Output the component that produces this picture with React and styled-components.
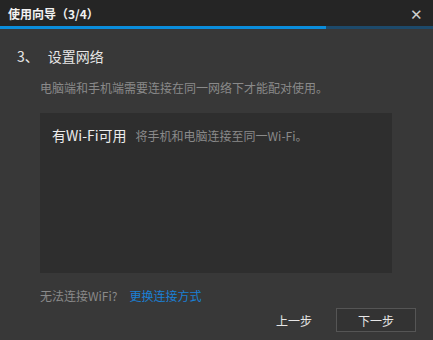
import React from "react";
import styled, { createGlobalStyle } from "styled-components";

const GlobalStyle = createGlobalStyle`
  html, body { margin: 0; padding: 0; background: #383838; }
  body {
    font-family: "Microsoft YaHei", "Noto Sans CJK SC", "Liberation Sans", sans-serif;
  }
`;

const Dialog = styled.div`
  width: 433px;
  height: 340px;
  background: #383838;
  display: flex;
  flex-direction: column;
`;

const TitleBar = styled.div`
  height: 26px;
  background: #252525;
  display: flex;
  align-items: center;
  justify-content: space-between;
  padding: 0 8px 0 8px;
  box-sizing: border-box;
`;

const Title = styled.div`
  color: #f2f2f2;
  font-size: 12px;
  font-weight: bold;
`;

const Close = styled.div`
  color: #cfcfcf;
  font-size: 15px;
  line-height: 1;
  margin-right: 2px;
`;

const Progress = styled.div`
  height: 3px;
  background: #1d4a6b;
  display: flex;
`;

const ProgressFill = styled.div`
  height: 100%;
  background: #0b8ddb;
`;

const Body = styled.div`
  flex: 1;
  padding: 17px 41px 0 40px;
  display: flex;
  flex-direction: column;
`;

const Heading = styled.div`
  margin-left: -23px;
  color: #e6e6e6;
  font-size: 14px;
  display: flex;
  gap: 9px;
  height: 20px;
  align-items: center;
`;

const Desc = styled.div`
  margin-top: 13px;
  color: #8a8a8a;
  font-size: 12px;
  height: 17px;
`;

const Panel = styled.div`
  margin-top: 17px;
  height: 160px;
  background: #2e2e2e;
  padding: 12px 12px;
  box-sizing: border-box;
  display: flex;
  align-items: baseline;
  gap: 9px;
`;

const Strong = styled.span`
  color: #ececec;
  font-size: 14px;
`;

const Hint = styled.span`
  color: #8a8a8a;
  font-size: 12px;
`;

const Help = styled.div`
  margin-top: 14px;
  display: flex;
  gap: 12px;
  font-size: 12px;
  color: #8a8a8a;
`;

const Link = styled.a`
  color: #1a80d6;
  text-decoration: none;
`;

const Footer = styled.div`
  margin-top: 4px;
  display: flex;
  justify-content: flex-end;
  gap: 20px;
  margin-right: -24px;
`;

const Button = styled.button`
  width: ${p => (p.$primary ? "80px" : "44px")};
  height: 24px;
  background: ${p => (p.$primary ? "#333333" : "transparent")};
  border: 1px solid ${p => (p.$primary ? "#555555" : "transparent")};
  color: #e6e6e6;
  font-family: inherit;
  font-size: 12px;
  padding: 0;
`;

export default function App() {
  return (
    <>
      <GlobalStyle />
      <Dialog>
        <TitleBar>
          <Title>使用向导（3/4）</Title>
          <Close>✕</Close>
        </TitleBar>
        <Progress>
          <ProgressFill style={{ width: `${(3 / 4) * 100 + 0.3}%` }} />
        </Progress>
        <Body>
          <Heading>
            <span>3、</span>
            <span>设置网络</span>
          </Heading>
          <Desc>电脑端和手机端需要连接在同一网络下才能配对使用。</Desc>
          <Panel>
            <Strong>有Wi-Fi可用</Strong>
            <Hint>将手机和电脑连接至同一Wi-Fi。</Hint>
          </Panel>
          <Help>
            <span>无法连接WiFi?</span>
            <Link href="#">更换连接方式</Link>
          </Help>
          <Footer>
            <Button>上一步</Button>
            <Button $primary>下一步</Button>
          </Footer>
        </Body>
      </Dialog>
    </>
  );
}
